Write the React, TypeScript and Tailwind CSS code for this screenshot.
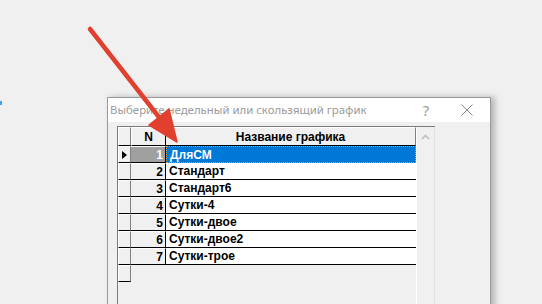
import React from "react";

const rows = [
  { n: 1, name: "ДляСМ" },
  { n: 2, name: "Стандарт" },
  { n: 3, name: "Стандарт6" },
  { n: 4, name: "Сутки-4" },
  { n: 5, name: "Сутки-двое" },
  { n: 6, name: "Сутки-двое2" },
  { n: 7, name: "Сутки-трое" },
];

export default function App() {
  return (
    <div className="relative w-[542px] h-[304px] overflow-hidden bg-[#f0f0f0]">
      {/* blue mark at left edge */}
      <div className="absolute left-0 top-[101px] w-[2px] h-[4px] bg-[#3aa8f0]" />

      {/* dialog window */}
      <div className="absolute left-[107px] top-[97px] w-[384px] h-[220px] border border-[#9a9a9a] bg-[#f0f0f0] shadow-[4px_0_6px_rgba(0,0,0,0.25)] flex flex-col">
        {/* title bar */}
        <div className="h-[24px] bg-white flex items-center shrink-0">
          <div
            className="pl-[2px] text-[11.4px] text-[#9b9b9b] flex-1 leading-none"
            style={{ fontFamily: '"Noto Sans", "Open Sans", sans-serif' }}
          >
            Выберите недельный или скользящий график
          </div>
          <div
            className="w-[20px] text-center text-[15px] text-[#9b9b9b] mr-[24px] leading-none"
            style={{ fontFamily: '"Noto Sans", sans-serif' }}
          >
            ?
          </div>
          <div className="w-[14px] h-[14px] mr-[16px] flex items-center justify-center">
            <svg width="12" height="12" viewBox="0 0 12 12">
              <path d="M0.5 0.5 L11.5 11.5 M11.5 0.5 L0.5 11.5" stroke="#8a8a8a" strokeWidth="1" />
            </svg>
          </div>
        </div>

        {/* body */}
        <div className="pl-[9px] pt-[4px] flex-1">
          <div
            className="flex w-[318px] h-[200px] border-l border-t border-[#7a7a7a]"
            style={{ fontFamily: '"Liberation Sans", Arial, sans-serif' }}
          >
            {/* grid */}
            <div className="w-[299px] flex flex-col">
              {/* header */}
              <div className="flex h-[19px] text-[12px] font-bold text-black">
                <div className="w-[13px] bg-[#f0f0f0] border-t border-l border-t-white border-l-white border-r border-b border-r-[#808080] border-b-black" />
                <div className="w-[35px] bg-[#f0f0f0] flex items-center justify-center border-t border-l border-t-white border-l-white border-r border-b border-r-black border-b-black">
                  N
                </div>
                <div className="flex-1 bg-[#f0f0f0] flex items-center justify-center border-t border-t-white border-r border-b border-r-[#808080] border-b-black">
                  Название графика
                </div>
              </div>
              {rows.map((r, i) => {
                const sel = i === 0;
                return (
                  <div key={r.n} className="flex h-[17px] text-[12px] font-bold">
                    <div className="w-[13px] bg-[#f0f0f0] flex items-center justify-center border-t border-l border-t-white border-l-white border-r border-b border-r-[#808080] border-b-black">
                      {sel && (
                        <svg width="5" height="8" viewBox="0 0 5 8">
                          <path d="M0 0 L5 4 L0 8 Z" fill="#000" />
                        </svg>
                      )}
                    </div>
                    <div
                      className={
                        "w-[35px] flex items-center justify-end pr-[2px] border-r border-b border-r-black border-b-black " +
                        (sel ? "bg-[#a0a0a0] text-white border-t border-t-white" : "bg-[#f0f0f0] text-black border-t border-t-white")
                      }
                    >
                      {r.n}
                    </div>
                    <div
                      className={
                        "flex-1 flex items-center pl-[3px] border-b " +
                        (sel
                          ? "bg-[#0078d7] text-white border border-dotted border-[#f29b32]"
                          : "bg-white text-black border-b-black")
                      }
                    >
                      {r.name}
                    </div>
                  </div>
                );
              })}
              {/* empty indicator cell */}
              <div className="flex h-[17px]">
                <div className="w-[13px] bg-[#f0f0f0] border-t border-l border-t-white border-l-white border-r border-b border-r-[#808080] border-b-black" />
              </div>
            </div>
            {/* scrollbar */}
            <div className="w-[19px] border-l border-l-white border-r border-r-[#e3e3e3] bg-[#f0f0f0] flex flex-col items-center">
              <div className="h-[19px] flex items-center justify-center">
                <svg width="9" height="6" viewBox="0 0 9 6">
                  <path d="M1 5 L4.5 1.5 L8 5" stroke="#bfbfbf" strokeWidth="1.6" fill="none" />
                </svg>
              </div>
            </div>
          </div>
        </div>
      </div>

      {/* red arrow */}
      <svg className="absolute left-0 top-0" width="542" height="304" viewBox="0 0 542 304">
        <line x1="90" y1="29" x2="162" y2="121" stroke="#e2402f" strokeWidth="4.5" strokeLinecap="round" />
        <path d="M177 142 L149 125 L169 109 Z" fill="#e2402f" stroke="#e2402f" strokeWidth="1.5" strokeLinejoin="round" />
      </svg>
    </div>
  );
}
